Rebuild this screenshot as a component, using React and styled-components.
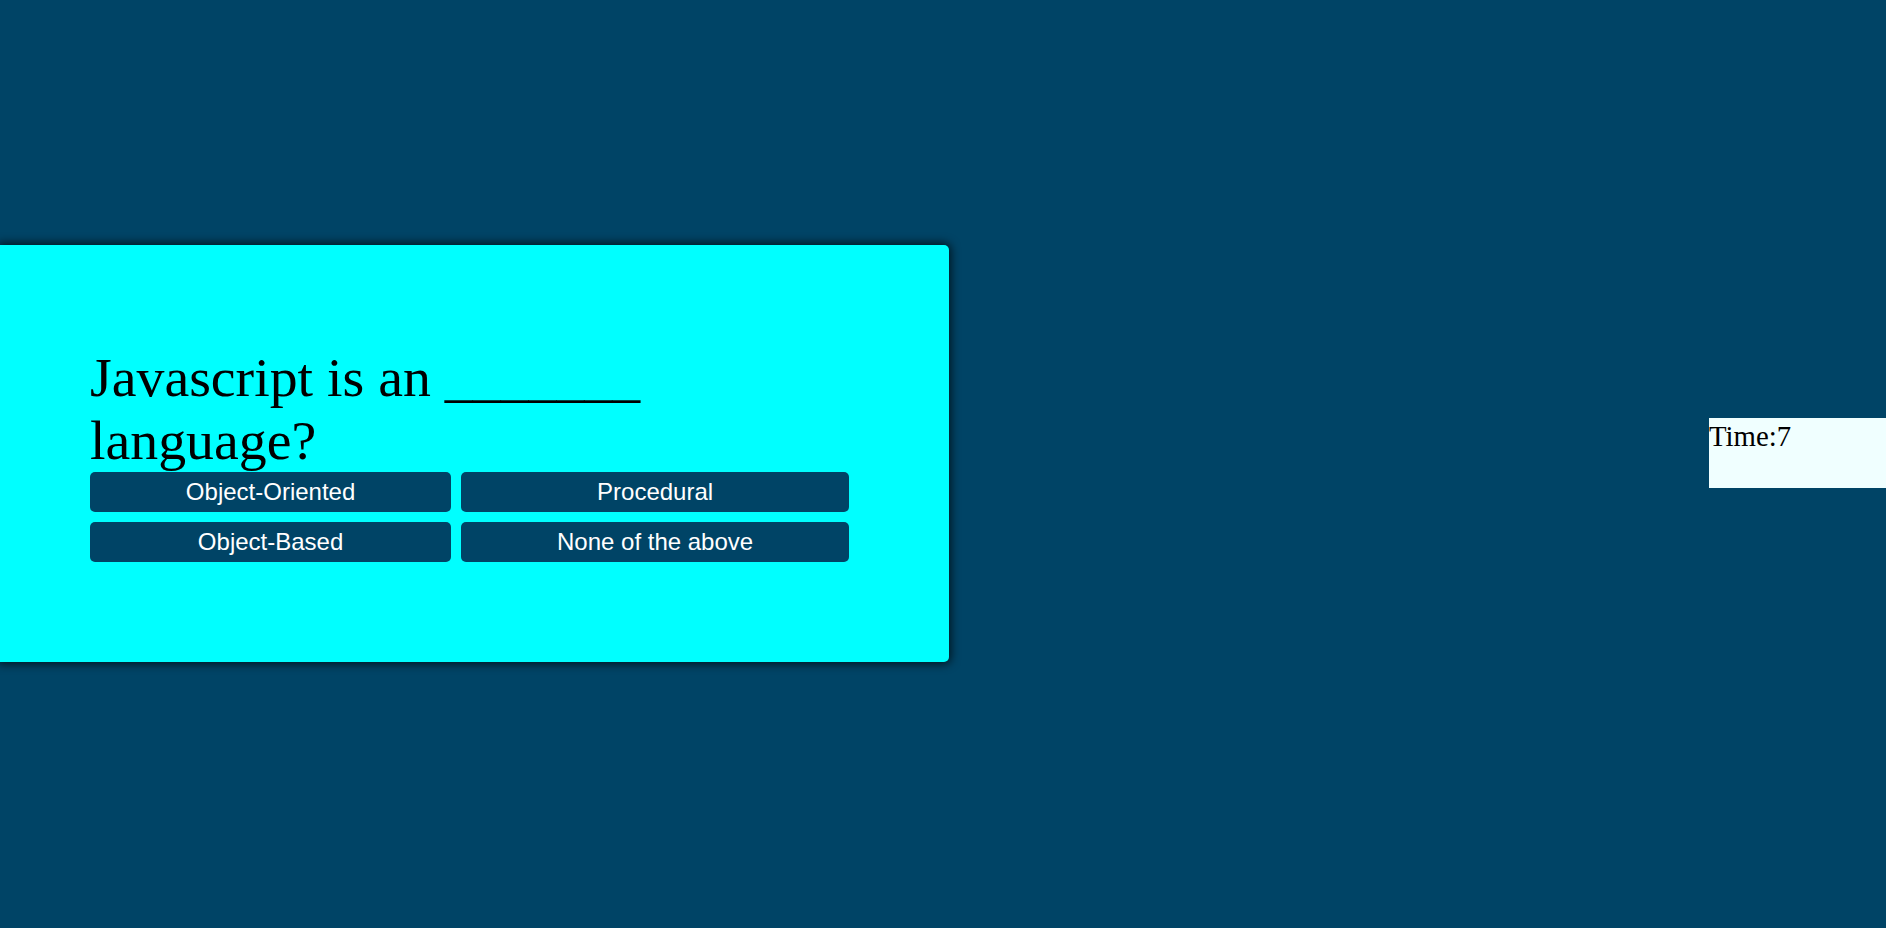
import React, { useState } from 'react'
import styled, { createGlobalStyle } from 'styled-components'

const GlobalStyle = createGlobalStyle`
    html, body {
        margin: 0;
        padding: 0;
        background: #004466;
    }
`

const Page = styled.div`
    height: 928px;
    padding-bottom: 22px;
    box-sizing: border-box;
    display: flex;
    justify-content: space-between;
    align-items: center;
`

const Card = styled.div`
    width: 949px;
    box-sizing: border-box;
    padding: 101px 100px 100px 90px;
    background: #00ffff;
    border-radius: 0 5px 5px 0;
    box-shadow: 0 0 10px 2px rgba(0, 0, 0, 0.7);
`

const Question = styled.div`
    font-family: "Liberation Serif", "Times New Roman", serif;
    font-size: 55.8px;
    line-height: 63px;
    color: #000;
`

const Options = styled.div`
    display: grid;
    grid-template-columns: auto auto;
    gap: 10px;
`

const Option = styled.button`
    height: 40px;
    border: none;
    border-radius: 5px;
    background: #004466;
    color: #fff;
    font-family: "Liberation Sans", Arial, sans-serif;
    font-size: 24px;
    cursor: pointer;
    padding: 0 12px;
`

const Timer = styled.div`
    width: 177px;
    height: 70px;
    background: #f0ffff;
    font-family: "Liberation Serif", "Times New Roman", serif;
    font-size: 28.8px;
    line-height: 36px;
    color: #000;
`

const options = ['Object-Oriented', 'Procedural', 'Object-Based', 'None of the above']

const App = () => {
    const [time] = useState(7)

    return (
        <>
            <GlobalStyle />
            <Page>
                <Card>
                    <Question>Javascript is an _______ language?</Question>
                    <Options>
                        {options.map((o) => (
                            <Option key={o}>{o}</Option>
                        ))}
                    </Options>
                </Card>
                <Timer>Time:{time}</Timer>
            </Page>
        </>
    )
}

export default App
